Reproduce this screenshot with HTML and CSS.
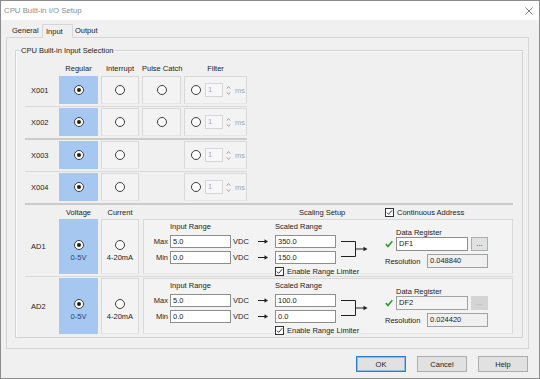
FILE: index.html
```html
<!DOCTYPE html>
<html>
<head>
<meta charset="utf-8">
<title>CPU Built-in I/O Setup</title>
<link rel="stylesheet" href="styles.css">
</head>
<body>
<div class="window">
  <div class="titlebar">
    <span class="title">CPU Built-in I/O Setup</span>
    <svg class="close" width="8" height="8" viewBox="0 0 8 8"><path d="M0.5 0.5L7.5 7.5M7.5 0.5L0.5 7.5" stroke="#6e6e6e" stroke-width="0.9" fill="none"/></svg>
  </div>
  <div class="tabs">
    <div class="tab tab-general">General</div>
    <div class="tab tab-active">Input</div>
    <div class="tab tab-output">Output</div>
  </div>
  <div class="panel">
    <div class="group">
      <div class="legend">CPU Built-in Input Selection</div>

      <div class="dgrid dhead">
        <div></div>
        <div class="hd">Regular</div>
        <div class="hd">Interrupt</div>
        <div class="hd">Pulse Catch</div>
        <div class="hd">Filter</div>
      </div>

      <div class="dgrid drow">
        <div class="rlabel">X001</div>
        <div class="cell sel"><span class="radio on"></span></div>
        <div class="cell"><span class="radio"></span></div>
        <div class="cell"><span class="radio"></span></div>
        <div class="cell filter"><span class="radio"></span><span class="spin">1</span><svg class="spinarr" width="5" height="11" viewBox="0 0 5 11"><path d="M0.8 3.6L2.5 1.6L4.2 3.6M0.8 7.4L2.5 9.4L4.2 7.4" stroke="#8e8e8e" stroke-width="0.8" fill="none"/></svg><span class="ms">ms</span></div>
      </div>

      <div class="dgrid drow thick">
        <div class="rlabel">X002</div>
        <div class="cell sel"><span class="radio on"></span></div>
        <div class="cell"><span class="radio"></span></div>
        <div class="cell"><span class="radio"></span></div>
        <div class="cell filter"><span class="radio"></span><span class="spin">1</span><svg class="spinarr" width="5" height="11" viewBox="0 0 5 11"><path d="M0.8 3.6L2.5 1.6L4.2 3.6M0.8 7.4L2.5 9.4L4.2 7.4" stroke="#8e8e8e" stroke-width="0.8" fill="none"/></svg><span class="ms">ms</span></div>
      </div>

      <div class="dgrid drow">
        <div class="rlabel">X003</div>
        <div class="cell sel"><span class="radio on"></span></div>
        <div class="cell"><span class="radio"></span></div>
        <div></div>
        <div class="cell filter"><span class="radio"></span><span class="spin">1</span><svg class="spinarr" width="5" height="11" viewBox="0 0 5 11"><path d="M0.8 3.6L2.5 1.6L4.2 3.6M0.8 7.4L2.5 9.4L4.2 7.4" stroke="#8e8e8e" stroke-width="0.8" fill="none"/></svg><span class="ms">ms</span></div>
      </div>

      <div class="dgrid drow thick full">
        <div class="rlabel">X004</div>
        <div class="cell sel"><span class="radio on"></span></div>
        <div class="cell"><span class="radio"></span></div>
        <div></div>
        <div class="cell filter"><span class="radio"></span><span class="spin">1</span><svg class="spinarr" width="5" height="11" viewBox="0 0 5 11"><path d="M0.8 3.6L2.5 1.6L4.2 3.6M0.8 7.4L2.5 9.4L4.2 7.4" stroke="#8e8e8e" stroke-width="0.8" fill="none"/></svg><span class="ms">ms</span></div>
      </div>

      <div class="agrid ahead">
        <div></div>
        <div class="hd">Voltage</div>
        <div class="hd">Current</div>
        <div class="shead">
          <span class="stitle">Scaling Setup</span>
          <span class="chk"><span class="cbox"><svg width="7" height="7" viewBox="0 0 7 7"><path d="M0.8 3.6L2.6 5.4L6.2 1.2" stroke="#222" stroke-width="0.9" fill="none"/></svg></span>Continuous Address</span>
        </div>
      </div>

      <div class="agrid arow">
        <div class="rlabel">AD1</div>
        <div class="cell sel acell"><span class="radio on"></span><span class="vtext">0-5V</span></div>
        <div class="cell acell"><span class="radio"></span><span class="ctext">4-20mA</span></div>
        <div class="scale">
          <div class="ranges">
            <div></div><div class="lbl">Input Range</div><div></div><div></div><div class="lbl">Scaled Range</div>
            <div class="mm">Max</div><div class="field">5.0</div><div class="unit">VDC</div><div class="arr"><svg width="20" height="13" viewBox="0 0 20 13"><path d="M3 6.5H10" stroke="#222" stroke-width="1"/><path d="M9.5 4.3L13 6.5L9.5 8.7Z" fill="#222"/></svg></div><div class="field">350.0</div>
            <div class="mm">Min</div><div class="field">0.0</div><div class="unit">VDC</div><div class="arr"><svg width="20" height="13" viewBox="0 0 20 13"><path d="M3 6.5H10" stroke="#222" stroke-width="1"/><path d="M9.5 4.3L13 6.5L9.5 8.7Z" fill="#222"/></svg></div><div class="field">150.0</div>
            <div></div><div></div><div></div><div></div>
            <div class="chk"><span class="cbox"><svg width="7" height="7" viewBox="0 0 7 7"><path d="M0.8 3.6L2.6 5.4L6.2 1.2" stroke="#222" stroke-width="0.9" fill="none"/></svg></span>Enable Range Limiter</div>
          </div>
          <svg class="bracket" width="49" height="53" viewBox="0 0 49 53"><path d="M5 21.5H19.5V36.5H5M19.5 29H28" stroke="#222" stroke-width="1" fill="none"/><path d="M27.5 26.8L31.5 29L27.5 31.2Z" fill="#222"/></svg>
          <div class="dreg">
            <div class="dlbl">Data Register</div>
            <div class="dline">
              <svg class="ok" width="8" height="8" viewBox="0 0 8 8"><path d="M0.8 4.2L3 6.4L7.4 1.2" stroke="#3a9b3a" stroke-width="1.7" fill="none"/></svg>
              <div class="field dfield">DF1</div>
              <div class="dots">...</div>
            </div>
            <div class="dline res">
              <span class="reslbl">Resolution</span>
              <div class="field ro">0.048840</div>
            </div>
          </div>
        </div>
      </div>

      <div class="agrid arow last">
        <div class="rlabel">AD2</div>
        <div class="cell sel acell"><span class="radio on"></span><span class="vtext">0-5V</span></div>
        <div class="cell acell"><span class="radio"></span><span class="ctext">4-20mA</span></div>
        <div class="scale">
          <div class="ranges">
            <div></div><div class="lbl">Input Range</div><div></div><div></div><div class="lbl">Scaled Range</div>
            <div class="mm">Max</div><div class="field">5.0</div><div class="unit">VDC</div><div class="arr"><svg width="20" height="13" viewBox="0 0 20 13"><path d="M3 6.5H10" stroke="#222" stroke-width="1"/><path d="M9.5 4.3L13 6.5L9.5 8.7Z" fill="#222"/></svg></div><div class="field">100.0</div>
            <div class="mm">Min</div><div class="field">0.0</div><div class="unit">VDC</div><div class="arr"><svg width="20" height="13" viewBox="0 0 20 13"><path d="M3 6.5H10" stroke="#222" stroke-width="1"/><path d="M9.5 4.3L13 6.5L9.5 8.7Z" fill="#222"/></svg></div><div class="field">0.0</div>
            <div></div><div></div><div></div><div></div>
            <div class="chk"><span class="cbox"><svg width="7" height="7" viewBox="0 0 7 7"><path d="M0.8 3.6L2.6 5.4L6.2 1.2" stroke="#222" stroke-width="0.9" fill="none"/></svg></span>Enable Range Limiter</div>
          </div>
          <svg class="bracket" width="49" height="53" viewBox="0 0 49 53"><path d="M5 21.5H19.5V36.5H5M19.5 29H28" stroke="#222" stroke-width="1" fill="none"/><path d="M27.5 26.8L31.5 29L27.5 31.2Z" fill="#222"/></svg>
          <div class="dreg">
            <div class="dlbl">Data Register</div>
            <div class="dline">
              <svg class="ok" width="8" height="8" viewBox="0 0 8 8"><path d="M0.8 4.2L3 6.4L7.4 1.2" stroke="#3a9b3a" stroke-width="1.7" fill="none"/></svg>
              <div class="field dfield auto">DF2</div>
              <div class="dots off">...</div>
            </div>
            <div class="dline res">
              <span class="reslbl">Resolution</span>
              <div class="field ro">0.024420</div>
            </div>
          </div>
        </div>
      </div>
    </div>
  </div>
  <div class="footer">
    <div class="btn default">OK</div>
    <div class="btn">Cancel</div>
    <div class="btn">Help</div>
  </div>
</div>
</body>
</html>
```

FILE: styles.css
```css
* { box-sizing: border-box; margin: 0; padding: 0; }
html, body { width: 540px; height: 379px; overflow: hidden; }
body {
  font-family: "Liberation Sans", Arial, sans-serif;
  font-size: 7.5px;
  color: #222;
  background: #f0f0f0;
}
.window {
  width: 540px;
  height: 379px;
  border: 1px solid #8c8c8c;
  background: #f0f0f0;
  display: flex;
  flex-direction: column;
}
.titlebar {
  height: 19px;
  flex: none;
  background: #fff;
  display: flex;
  align-items: center;
  justify-content: space-between;
  padding: 0 6px 0 3px;
}
.title { font-size: 7.8px; color: #8c8c8c; }

.tabs {
  height: 17px;
  flex: none;
  display: flex;
  align-items: flex-end;
  padding-left: 7px;
}
.tab { height: 12px; line-height: 11px; white-space: nowrap; }
.tab-general { width: 34px; padding-left: 4px; }
.tab-active {
  width: 31px;
  height: 14px;
  line-height: 13px;
  padding-left: 3px;
  margin-bottom: -1px;
  border: 1px solid #d6d6d6;
  border-bottom: none;
  background: #f0f0f0;
  position: relative;
  z-index: 1;
}
.tab-output { width: 32px; padding-left: 2px; }

.panel {
  flex: none;
  margin: 0 10px 0 5px;
  border: 1px solid #d6d6d6;
  display: flex;
  flex-direction: column;
}
.group {
  margin: 12px 5px 10px 8px;
  border: 1px solid #d2d2d2;
  box-shadow: inset 1px 1px 0 #fbfbfb;
  padding: 0 9px 1px 9px;
  display: flex;
  flex-direction: column;
}
.legend {
  align-self: flex-start;
  margin: -5px 0 0 -5px;
  height: 9px;
  line-height: 9px;
  padding: 0 1px;
  background: #f0f0f0;
  white-space: nowrap;
}

.dgrid {
  display: grid;
  grid-template-columns: 31px 39px 38px 39px 63px;
  column-gap: 3px;
  width: 222px;
}
.dhead { margin-top: 7px; height: 13px; align-items: center; }
.hd { text-align: center; white-space: nowrap; }
.drow { padding: 1px 0 2px; border-bottom: 1px solid #d9d9d9; }
.drow.thick { border-bottom: 2px solid #cbcbcb; }
.drow.full { width: 488px; }
.rlabel { padding-left: 6px; display: flex; align-items: center; }

.cell {
  height: 28px;
  display: flex;
  align-items: center;
  justify-content: center;
  border: 1px solid #d8d8d8;
  border-bottom-color: #e7e7e7;
  background: #f3f3f3;
}
.cell.sel { background: #a6c8f0; border-color: #a6c8f0; }
.cell.filter { justify-content: flex-start; padding-left: 6px; }

.radio {
  width: 10px;
  height: 10px;
  flex: none;
  border: 1px solid #3c3c3c;
  border-radius: 50%;
  background: #fff;
  display: flex;
  align-items: center;
  justify-content: center;
}
.radio.on::after {
  content: "";
  width: 4px;
  height: 4px;
  border-radius: 50%;
  background: #1e1e1e;
}
.spin {
  margin-left: 4px;
  width: 18px;
  height: 14px;
  line-height: 12px;
  padding-left: 2px;
  border: 1px solid #d6d6d6;
  background: #f7f7f7;
  color: #a8a8a8;
}
.spinarr { margin-left: 3px; flex: none; }
.ms { margin-left: 4px; color: #a8a8a8; }

.agrid {
  display: grid;
  grid-template-columns: 31px 39px 38px 371px;
  column-gap: 3px;
}
.ahead { height: 14px; align-items: center; }
.shead { display: flex; align-items: center; padding-left: 157px; white-space: nowrap; }
.stitle { width: 86px; }
.arow { padding: 0 0 2px; border-bottom: 1px solid #d9d9d9; }
.arow.last { padding-top: 1px; border-bottom: none; }
.acell {
  height: 55px;
  flex-direction: column;
  justify-content: flex-start;
  padding-top: 20px;
  gap: 3px;
}
.arow.last .acell { height: 56px; }
.vtext { color: #24407a; line-height: 9px; }
.ctext { line-height: 9px; white-space: nowrap; }

.chk { display: flex; align-items: center; white-space: nowrap; }
.cbox {
  width: 9px;
  height: 9px;
  flex: none;
  margin-right: 3px;
  border: 1px solid #333;
  background: #fff;
  display: flex;
  align-items: center;
  justify-content: center;
}

.scale {
  margin-left: 1px;
  height: 55px;
  border: 1px solid #d8d8d8;
  border-bottom-color: #e7e7e7;
  background: #f3f3f3;
  display: flex;
}
.arow.last .scale { height: 56px; }
.ranges {
  display: grid;
  grid-template-columns: 26px 61px 24px 20px 61px;
  grid-template-rows: 11px 13px 13px 9px;
  row-gap: 3px;
  padding-top: 1px;
  align-content: start;
}
.lbl { display: flex; align-items: center; white-space: nowrap; }
.mm { display: flex; align-items: center; justify-content: flex-end; padding-right: 2px; }
.unit { display: flex; align-items: center; padding-left: 2px; }
.arr { display: flex; align-items: center; }
.field {
  height: 13px;
  line-height: 11px;
  padding-left: 2px;
  border: 1px solid #8e8e8e;
  background: #fff;
  white-space: nowrap;
}
.bracket { flex: none; }
.dreg { display: flex; flex-direction: column; padding-top: 8px; gap: 3px; }
.dlbl { height: 9px; line-height: 9px; margin-left: 11px; margin-bottom: -3px; }
.dline { display: flex; align-items: center; height: 14px; }
.ok { flex: none; margin-right: 3px; }
.dfield { width: 72px; height: 14px; line-height: 12px; }
.dfield.auto { background: #f4f4f4; border-color: #a2a2a2; }
.dots {
  margin-left: 3px;
  width: 17px;
  height: 14px;
  line-height: 11px;
  text-align: center;
  border: 1px solid #adadad;
  background: #e1e1e1;
}
.dots.off { background: #d4d4d4; border-color: #d4d4d4; color: #a6a6a6; }
.reslbl { width: 42px; }
.ro { width: 61px; height: 14px; line-height: 12px; background: #f0f0f0; border-color: #a0a0a0; }

.footer {
  flex: 1;
  display: flex;
  justify-content: flex-end;
  align-items: flex-start;
  padding: 7px 11px 0 0;
  gap: 11px;
}
.btn {
  width: 50px;
  height: 16px;
  border: 1px solid #adadad;
  background: #e1e1e1;
  display: flex;
  align-items: center;
  justify-content: center;
}
.btn.default { border-color: #2b7ccf; box-shadow: inset 0 0 0 1px #8dbbe6; }
```
